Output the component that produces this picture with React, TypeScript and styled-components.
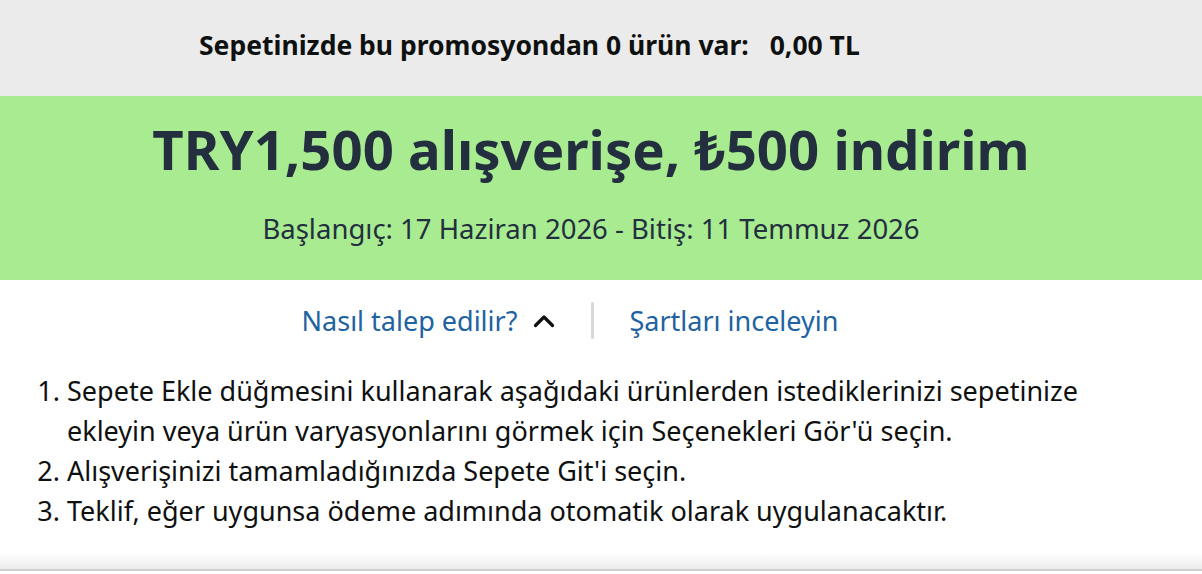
import React from 'react';
import styled, { createGlobalStyle } from 'styled-components';

const GlobalStyle = createGlobalStyle`
  html, body {
    margin: 0;
    padding: 0;
    background: #ffffff;
  }
  body {
    font-family: "Noto Sans", "Open Sans", Arial, sans-serif;
    color: #0f1111;
  }
`;

const Page = styled.div`
  width: 100%;
  display: flex;
  flex-direction: column;
`;

const CartBar = styled.div`
  height: 96px;
  background-color: #eaebea;
  display: flex;
  align-items: center;
  padding: 0 0 6px 199px;
  box-sizing: border-box;
  font-size: 26.5px;
  font-weight: 700;
  color: #0f1111;
`;

const CartAmount = styled.span`
  margin-left: 21px;
`;

const PromoBanner = styled.div`
  height: 184px;
  background-color: #a8eb91;
  display: flex;
  flex-direction: column;
  align-items: center;
  padding: 18px 20px 0 0;
  box-sizing: border-box;
  color: #232f3e;
`;

const PromoTitle = styled.h1`
  margin: 0;
  font-size: 54.5px;
  line-height: 70px;
  font-weight: 700;
`;

const PromoDates = styled.p`
  margin: 30px 0 0;
  font-size: 27.5px;
  line-height: 30px;
  font-weight: 400;
`;

const LinkRow = styled.div`
  display: flex;
  align-items: center;
  justify-content: center;
  padding: 22px 62px 0 0;
`;

const LinkButton = styled.a`
  display: flex;
  align-items: center;
  gap: 15px;
  color: #2162a1;
  font-size: 27px;
  line-height: 37px;
  text-decoration: none;
  cursor: pointer;
`;

const Divider = styled.span`
  width: 3px;
  height: 37px;
  background-color: #d5d9d9;
  border-radius: 2px;
  margin: 0 35px;
`;

const Steps = styled.ol`
  margin: 32px 0 0;
  padding: 0 60px 0 67px;
  font-size: 27px;
  line-height: 40px;
  color: #0f1111;
`;

const Step = styled.li`
  margin: 0;
`;

const BottomEdge = styled.div`
  margin-top: 22px;
  height: 16px;
  background: linear-gradient(to bottom, #ffffff, #ececec);
  border-bottom: 2px solid #cfcfcf;
`;

const ChevronUp = () => (
  <svg width="24" height="24" viewBox="0 0 24 24" fill="none">
    <path d="M3.5 16.5 L12 8 L20.5 16.5" stroke="#0f1111" strokeWidth="3.2" strokeLinecap="round" strokeLinejoin="round" />
  </svg>
);

const App: React.FC = () => {
  return (
    <Page>
      <GlobalStyle />
      <CartBar>
        Sepetinizde bu promosyondan 0 ürün var:
        <CartAmount>0,00 TL</CartAmount>
      </CartBar>
      <PromoBanner>
        <PromoTitle>TRY1,500 alışverişe, ₺500 indirim</PromoTitle>
        <PromoDates>Başlangıç: 17 Haziran 2026 - Bitiş: 11 Temmuz 2026</PromoDates>
      </PromoBanner>
      <LinkRow>
        <LinkButton>
          Nasıl talep edilir?
          <ChevronUp />
        </LinkButton>
        <Divider />
        <LinkButton>Şartları inceleyin</LinkButton>
      </LinkRow>
      <Steps>
        <Step>
          Sepete Ekle düğmesini kullanarak aşağıdaki ürünlerden istediklerinizi sepetinize ekleyin veya ürün
          varyasyonlarını görmek için Seçenekleri Gör'ü seçin.
        </Step>
        <Step>Alışverişinizi tamamladığınızda Sepete Git'i seçin.</Step>
        <Step>Teklif, eğer uygunsa ödeme adımında otomatik olarak uygulanacaktır.</Step>
      </Steps>
      <BottomEdge />
    </Page>
  );
};

export default App;
